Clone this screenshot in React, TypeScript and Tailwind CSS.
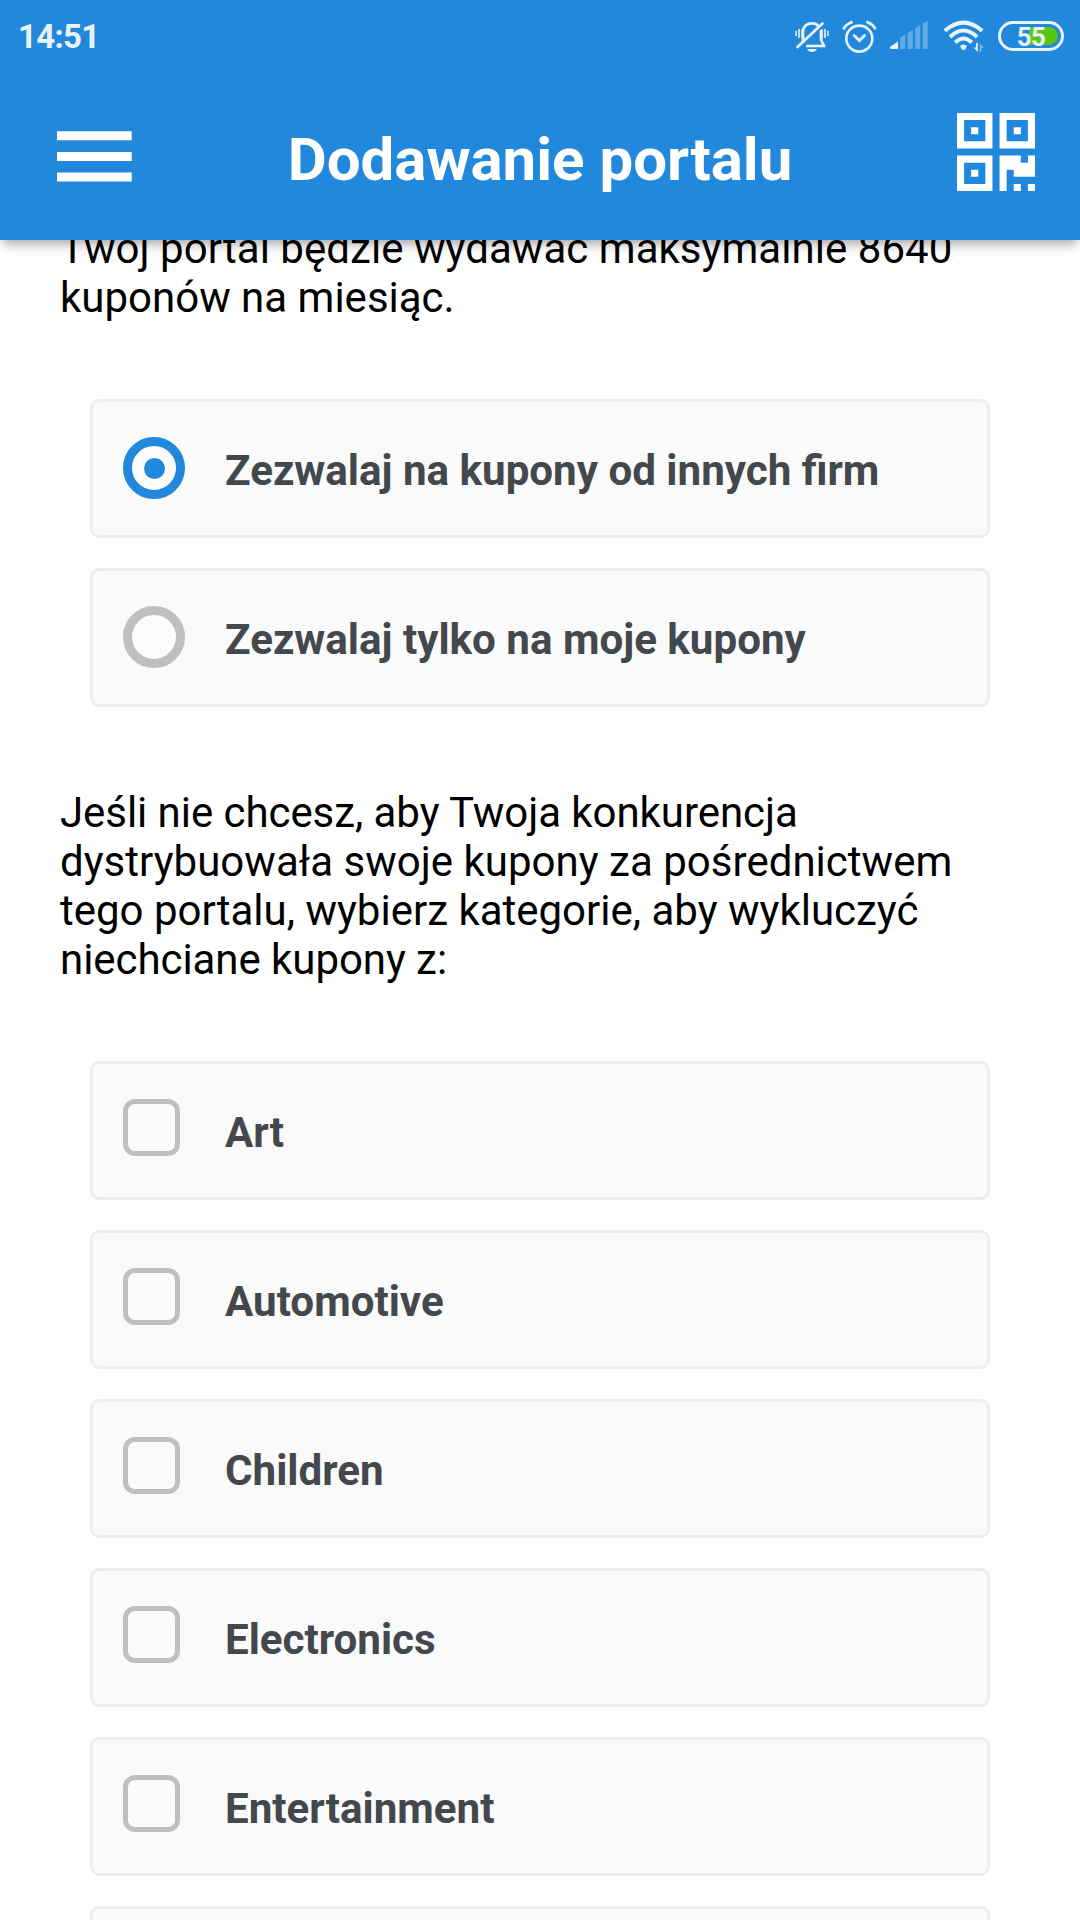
const categories = ["Art", "Automotive", "Children", "Electronics", "Entertainment", ""];

function StatusBar() {
  return (
    <div className="flex h-[75px] items-start justify-between text-[#e9f3fb]">
      <span className="ml-[18px] mt-[18px] text-[33px] leading-[38px] font-bold tracking-[-0.7px]">14:51</span>
      <div className="mr-4 flex">
        <svg className="mt-5 h-[34px] w-[34px]" viewBox="0 0 34 34" fill="none" stroke="currentColor">
          <path d="M8 23V12C8 6 12 3.3 17 3.3c3 0 5 1 6.500 2.800M26 10v9c0 3 3 5 3 7H11" strokeWidth="2.7" />
          <path d="M2.500 27 27.500 3.500" strokeWidth="2.700" strokeLinecap="round" />
          <path d="M1 11v5M4 9v9M7 9v9M27 9v9M30 9v9M33 11v5" strokeWidth="1.6" />
          <path d="M12 29h10c-2 4-8 4-10 0z" fill="currentColor" stroke="none" />
        </svg>
        <svg className="ml-[13px] mt-5 h-[34px] w-[34px]" viewBox="0 0 34 34" fill="none" stroke="currentColor">
          <circle cx="17.3" cy="18.6" r="13" strokeWidth="2.6" />
          <path d="m12.200 15.500 5.200 5 5.200-5" strokeWidth="2.8" strokeLinecap="round" />
          <path d="M2 8.200Q4.500 4 9.500 2.200M25.500 2.200Q30.500 4 33 8.200" strokeWidth="2.8" strokeLinecap="round" />
        </svg>
        <svg className="ml-[13px] mt-5 h-[30px] w-[40px]" viewBox="0 0 40 30" fill="currentColor">
          <path d="M1.500 26.500 9 21.500v7.500H2q-2-1 -.5-2.500z" />
          <path
            d="M12 18.800q0-1 1-1.800l4-2.500V29h-5zM19.500 14q0-1 1-1.800l4-2.500V29h-5zM27 9q0-1 1-1.800l4-2.500V29h-5zM34.700 4.500q0-1 1-1.800L39.500 1V29h-4.800z"
            opacity=".32"
            transform="translate(-.8 0)"
          />
        </svg>
        <svg className="ml-[14px] mt-5 h-[34px] w-[42px]" viewBox="0 0 42 34" fill="none" stroke="currentColor">
          <path d="M1.800 10.800Q20.500-5.500 39.200 10.800" strokeWidth="4" />
          <path d="M7 17Q20.500 4 34 17" strokeWidth="4" />
          <path d="M12.200 22.500Q20.500 14.500 28.800 22.500" strokeWidth="4" />
          <path d="M17 26Q20.500 23 24 26L22.500 29Q20.500 31 18.500 29z" fill="currentColor" stroke="none" />
          <path d="M33 23h1.800v9L30.500 27.500H33z" fill="currentColor" stroke="none" />
          <path d="M36.500 32V23L41 28h-2.500v4z" fill="currentColor" stroke="none" opacity=".4" />
        </svg>
        <div className="relative ml-[13px] mt-[21px] flex h-[30px] w-[66px] items-center justify-end rounded-full border-[3px] border-current pr-[3px]">
          <div className="h-[18px] w-[29px] rounded-r-full bg-[#58c414]" />
          <span className="absolute inset-x-0 top-[-2px] text-center text-[26px] leading-[30px] font-bold tracking-[-0.6px]">
            55
          </span>
        </div>
      </div>
    </div>
  );
}

function MenuIcon() {
  return (
    <svg className="h-[51px] w-[75px]" viewBox="0 0 75 51" fill="white">
      <path d="M0 .3h74.700v9H0zM0 21h74.700v9H0zM0 41.600h74.700v9H0z" />
    </svg>
  );
}

function QrIcon() {
  return (
    <svg className="h-[78px] w-[78px]" viewBox="0 0 11 11" fill="white" fillRule="evenodd">
      <path d="M0 0h5v5H0zM1 1v3h3V1zM2 2h1v1H2z" />
      <path d="M6 0h5v5H6zM7 1v3h3V1zM8 2h1v1H8z" />
      <path d="M0 6h5v5H0zM1 7v3h3V7zM2 8h1v1H2z" />
      <path d="M6 6h3v1h1V6h1v3H8V8H7v3H6zM8 10h1v1H8zM10 10h1v1h-1z" />
    </svg>
  );
}

function Header() {
  return (
    <header className="relative z-10 h-60 bg-[#2288dc] shadow-[0_6px_12px_-3px_rgba(0,0,0,0.4)]">
      <StatusBar />
      <div className="flex items-start pr-[45px] pl-[57px]">
        <div className="mt-[56px]">
          <MenuIcon />
        </div>
        <h1 className="mt-[50px] flex-1 text-center text-[60px] leading-[70px] font-bold text-white">
          <span className="-ml-[9px]">Dodawanie portalu</span>
        </h1>
        <div className="mt-[38px]">
          <QrIcon />
        </div>
      </div>
    </header>
  );
}

function Radio({ selected }: { selected?: boolean }) {
  return (
    <span
      className={
        selected
          ? "flex size-[62px] items-center justify-center rounded-full border-[9px] border-[#2288dc] bg-[#fcfcfc]"
          : "flex size-[62px] items-center justify-center rounded-full border-[9px] border-[#bfbfbf] bg-[#fcfcfc]"
      }
    >
      {selected && <span className="size-[21px] rounded-full bg-[#2288dc]" />}
    </span>
  );
}

function Option({ label, radio, selected }: { label: string; radio?: boolean; selected?: boolean }) {
  return (
    <div className="flex h-[139px] items-start rounded-[9px] border-[3px] border-[#eeeeee] bg-[#fafafa] pl-[30px]">
      <div className="mt-[35px] w-[102px]">
        {radio ? (
          <Radio selected={selected} />
        ) : (
          <span className="block h-[57px] w-[56.5px] rounded-[12px] border-[5px] border-[#bfbfbf] bg-[#fbfbfb]" />
        )}
      </div>
      <span className="mt-[44px] text-[42.14px] leading-[49px] font-bold text-[#43484d]">{label}</span>
    </div>
  );
}

export default function App() {
  return (
    <div className="h-[1920px] w-[1080px] overflow-hidden bg-white font-['Roboto',sans-serif]">
      <Header />
      <main className="-mt-4 text-[42px] leading-[49px] text-black">
        <p className="ml-[60px] whitespace-nowrap">
          <span className="tracking-[0.04px]">Twój portal będzie wydawać maksymalnie 8640</span>
          <br />
          kuponów na miesiąc.
        </p>
        <div className="mx-[90px] mt-[77px] flex flex-col gap-[30px]">
          <Option label="Zezwalaj na kupony od innych firm" radio selected />
          <Option label="Zezwalaj tylko na moje kupony" radio />
        </div>
        <p className="mt-[81px] ml-[60px] whitespace-nowrap">
          <span className="tracking-[-0.06px]">Jeśli nie chcesz, aby Twoja konkurencja</span>
          <br />
          <span className="tracking-[0.02px]">dystrybuowała swoje kupony za pośrednictwem</span>
          <br />
          tego portalu, wybierz kategorie, aby wykluczyć
          <br />
          <span className="tracking-[-0.06px]">niechciane kupony z:</span>
        </p>
        <div className="mx-[90px] mt-[77px] flex flex-col gap-[30px]">
          {categories.map((name, index) => (
            <Option key={index} label={name} />
          ))}
        </div>
      </main>
    </div>
  );
}
